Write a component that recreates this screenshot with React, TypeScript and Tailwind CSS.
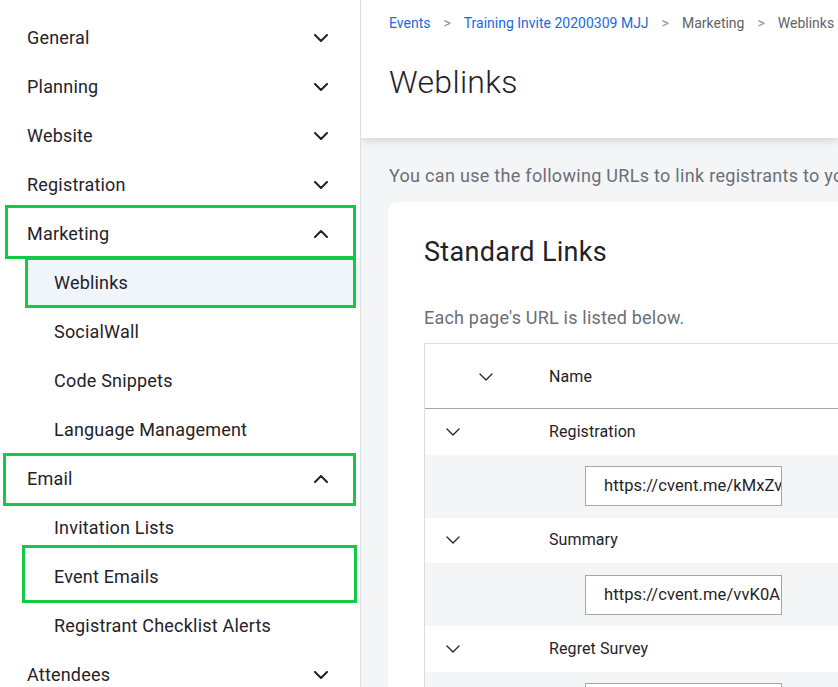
import React from 'react'

type NavItem = { label: string; sub?: boolean; open?: boolean; active?: boolean }

const navItems: NavItem[] = [
  { label: 'General' },
  { label: 'Planning' },
  { label: 'Website' },
  { label: 'Registration' },
  { label: 'Marketing', open: true },
  { label: 'Weblinks', sub: true, active: true },
  { label: 'SocialWall', sub: true },
  { label: 'Code Snippets', sub: true },
  { label: 'Language Management', sub: true },
  { label: 'Email', open: true },
  { label: 'Invitation Lists', sub: true },
  { label: 'Event Emails', sub: true },
  { label: 'Registrant Checklist Alerts', sub: true },
  { label: 'Attendees' },
]

const links = [
  { name: 'Registration', url: 'https://cvent.me/kMxZv' },
  { name: 'Summary', url: 'https://cvent.me/vvK0A' },
  { name: 'Regret Survey', url: '' },
]

function Chevron({ up, thin }: { up?: boolean; thin?: boolean }) {
  return (
    <svg width="14" height="8" viewBox="0 0 14 8" fill="none" className={up ? 'rotate-180' : ''}>
      <path d="M1 1l6 6 6-6" stroke="#1f2329" strokeWidth={thin ? 1.3 : 2} strokeLinecap="round" strokeLinejoin="round" />
    </svg>
  )
}

function Sidebar() {
  return (
    <aside className="relative w-[361px] shrink-0 border-r border-[#dcdfe3] bg-white pt-[13px]">
      {navItems.map((item) => (
        <div
          key={item.label}
          className={
            'flex h-[49px] items-center justify-between pr-[32px] text-[18px] tracking-[0.2px] text-[#1f2329] ' +
            (item.sub ? 'pl-[54px] ' : 'pl-[27px] ') +
            (item.active ? 'ml-[27px] !pl-[27px] bg-[#f0f5fc]' : '')
          }
        >
          <span>{item.label}</span>
          {!item.sub && <Chevron up={item.open} />}
        </div>
      ))}

      {/* green annotation boxes */}
      <div className="absolute left-[5px] top-[205px] h-[54px] w-[351px] border-[3px] border-[#14c943]" />
      <div className="absolute left-[25px] top-[257px] h-[51px] w-[331px] border-[3px] border-[#14c943]" />
      <div className="absolute left-[3px] top-[453px] h-[53px] w-[353px] border-[3px] border-[#14c943]" />
      <div className="absolute left-[22px] top-[545px] h-[58px] w-[335px] border-[3px] border-[#14c943]" />
    </aside>
  )
}

export default function App() {
  return (
    <div className="flex h-[687px] w-[838px] overflow-hidden bg-white font-['Roboto','Liberation_Sans',sans-serif]">
      <Sidebar />
      <main className="min-w-0 flex-1 overflow-hidden bg-[#f4f5f7]">
        <header className="relative z-10 h-[138px] bg-white shadow-[0_3px_8px_rgba(0,0,0,0.13)]">
          <nav className="flex h-[46px] items-center gap-[13px] whitespace-nowrap pl-[28px] text-[14px]">
            <span className="text-[#1a6ae0]">Events</span>
            <span className="text-[#8a8e94]">&gt;</span>
            <span className="text-[#1a6ae0]">Training Invite 20200309 MJJ</span>
            <span className="text-[#8a8e94]">&gt;</span>
            <span className="text-[#5f6369]">Marketing</span>
            <span className="text-[#8a8e94]">&gt;</span>
            <span className="text-[#5f6369]">Weblinks</span>
          </nav>
          <h1 className="pl-[28px] pt-[12px] text-[32px] leading-[48px] font-light tracking-[0.3px] text-[#1f2329]">Weblinks</h1>
        </header>

        <p className="whitespace-nowrap pl-[28px] pt-[26px] text-[18px] leading-[24px] tracking-[0.3px] text-[#6b6f76]">
          You can use the following URLs to link registrants to your event pages.
        </p>

        <section className="ml-[27px] mt-[14px] w-[700px] rounded-tl-[10px] bg-white pl-[36px] pt-[32px]">
          <h2 className="text-[27px] leading-[36px] tracking-[0.3px] text-[#1f2329]">Standard Links</h2>
          <p className="pt-[42px] text-[18px] leading-[12px] tracking-[0.2px] text-[#6b6f76]">Each page's URL is listed below.</p>

          <div className="mt-[19px] border-l border-t border-[#d9dce0] text-[16px] tracking-[0.1px] text-[#1f2329]">
            <div className="flex h-[65px] items-center border-b border-[#a3a6ab] pt-[2px]">
              <div className="w-[124px] pl-[54px]">
                <Chevron thin />
              </div>
              <span>Name</span>
            </div>
            {links.map((l) => (
              <React.Fragment key={l.name}>
                <div className="flex h-[45.5px] items-center bg-white">
                  <div className="w-[124px] pl-[21px]">
                    <Chevron thin />
                  </div>
                  <span>{l.name}</span>
                </div>
                <div className="flex h-[63px] items-center bg-[#f4f5f7] pl-[160px]">
                  <div className="h-[40px] w-[197px] overflow-hidden whitespace-nowrap border border-[#a3a6ab] bg-white pl-[18px] text-[16.5px] leading-[38px]">
                    {l.url}
                  </div>
                </div>
              </React.Fragment>
            ))}
          </div>
        </section>
      </main>
    </div>
  )
}
